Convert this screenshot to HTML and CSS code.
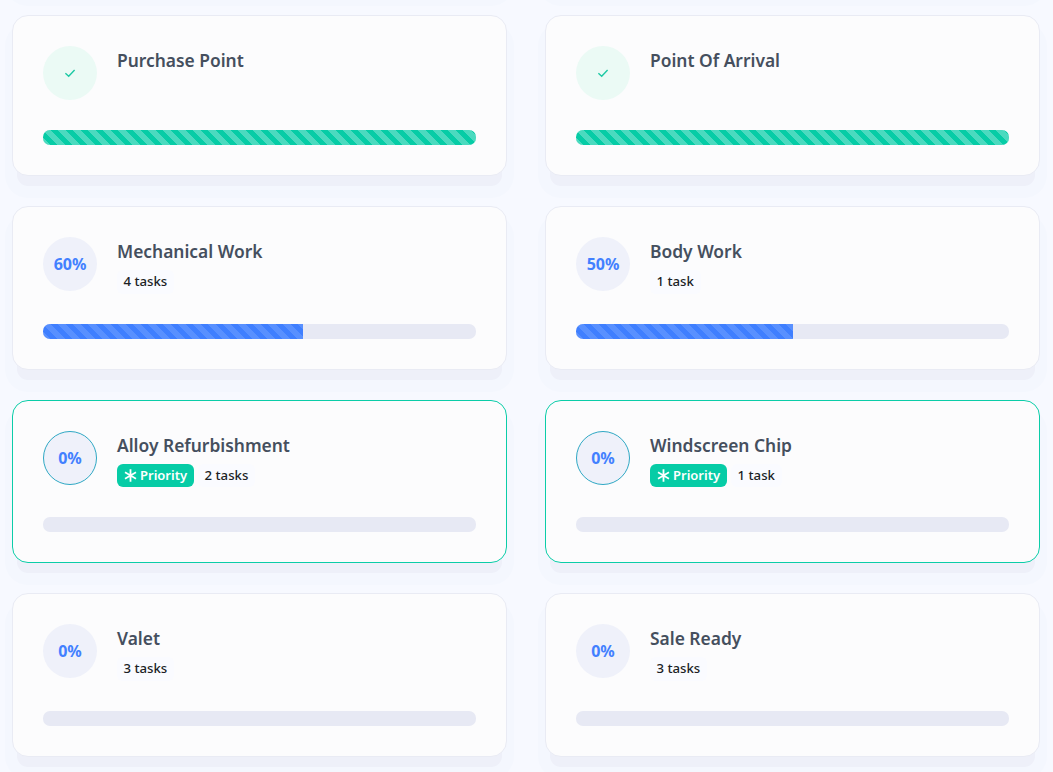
FILE: index.html
```html
<!DOCTYPE html>
<html lang="en">
<head>
  <meta charset="UTF-8" />
  <title>Vehicle Stages</title>
  <link rel="stylesheet" href="styles.css">
</head>
<body>
  <div class="stubs">
    <div class="stub"></div>
    <div class="stub"></div>
  </div>

  <div class="stages">
    <div class="card">
      <div class="card-head">
        <div class="circle done">
          <svg width="14" height="14" viewBox="0 0 14 14" aria-hidden="true"><path d="M2.4 7.2 5.7 10.2 11.6 3.9" fill="none" stroke="#1cc9a4" stroke-width="1.4"/></svg>
        </div>
        <div class="info">
          <h3>Purchase Point</h3>
        </div>
      </div>
      <div class="bar"><div class="fill green full"></div></div>
    </div>

    <div class="card">
      <div class="card-head">
        <div class="circle done">
          <svg width="14" height="14" viewBox="0 0 14 14" aria-hidden="true"><path d="M2.4 7.2 5.7 10.2 11.6 3.9" fill="none" stroke="#1cc9a4" stroke-width="1.4"/></svg>
        </div>
        <div class="info">
          <h3>Point Of Arrival</h3>
        </div>
      </div>
      <div class="bar"><div class="fill green full"></div></div>
    </div>

    <div class="card">
      <div class="card-head">
        <div class="circle">60%</div>
        <div class="info">
          <h3>Mechanical Work</h3>
          <div class="tags"><span class="tasks">4 tasks</span></div>
        </div>
      </div>
      <div class="bar"><div class="fill blue" style="width: 60%"></div></div>
    </div>

    <div class="card">
      <div class="card-head">
        <div class="circle">50%</div>
        <div class="info">
          <h3>Body Work</h3>
          <div class="tags"><span class="tasks">1 task</span></div>
        </div>
      </div>
      <div class="bar"><div class="fill blue" style="width: 50%"></div></div>
    </div>

    <div class="card priority">
      <div class="card-head">
        <div class="circle">0%</div>
        <div class="info">
          <h3>Alloy Refurbishment</h3>
          <div class="tags">
            <span class="flag">
              <svg width="13" height="13" viewBox="0 0 13 13" aria-hidden="true"><path d="M6.5 .2V12.8M1 3.3 12 9.7M12 3.3 1 9.7" stroke="#fff" stroke-width="1.8" fill="none"/></svg>
              Priority
            </span>
            <span class="tasks">2 tasks</span>
          </div>
        </div>
      </div>
      <div class="bar"></div>
    </div>

    <div class="card priority">
      <div class="card-head">
        <div class="circle">0%</div>
        <div class="info">
          <h3>Windscreen Chip</h3>
          <div class="tags">
            <span class="flag">
              <svg width="13" height="13" viewBox="0 0 13 13" aria-hidden="true"><path d="M6.5 .2V12.8M1 3.3 12 9.7M12 3.3 1 9.7" stroke="#fff" stroke-width="1.8" fill="none"/></svg>
              Priority
            </span>
            <span class="tasks">1 task</span>
          </div>
        </div>
      </div>
      <div class="bar"></div>
    </div>

    <div class="card">
      <div class="card-head">
        <div class="circle">0%</div>
        <div class="info">
          <h3>Valet</h3>
          <div class="tags"><span class="tasks">3 tasks</span></div>
        </div>
      </div>
      <div class="bar"></div>
    </div>

    <div class="card">
      <div class="card-head">
        <div class="circle">0%</div>
        <div class="info">
          <h3>Sale Ready</h3>
          <div class="tags"><span class="tasks">3 tasks</span></div>
        </div>
      </div>
      <div class="bar"></div>
    </div>
  </div>
</body>
</html>
```

FILE: styles.css
```css
html, body {
  height: 100%;
}
body {
  margin: 0;
  background: #f7f9ff;
  color: #454f5e;
  font-family: "Noto Sans", "Open Sans", sans-serif;
  overflow: hidden;
}
/* bottom of the row scrolled out above the top edge */
.stubs, .stages {
  display: grid;
  grid-template-columns: 495px 495px;
  column-gap: 38px;
  padding: 0 13px 0 12px;
}
.stubs {
  margin-bottom: 9px;
}
.stages {
  row-gap: 30px;
}
.stub {
  height: 26px;
  margin: -20px -7px 0;
  background: #f4f7fe;
  border-radius: 0 0 23px 23px;
}
.card {
  box-sizing: border-box;
  padding: 30px;
  background: #fcfcfd;
  border: 1px solid #e9ebf4;
  border-radius: 16px;
  box-shadow: 0 15px 0 -5px #eef0f9, 0 15px 0 7px #f4f7fe;
}
.card.priority {
  border-color: #0bcda8;
}
.card-head {
  display: flex;
  align-items: flex-start;
  gap: 20px;
}
.circle {
  box-sizing: border-box;
  width: 54px;
  height: 54px;
  flex: none;
  display: flex;
  align-items: center;
  justify-content: center;
  border-radius: 50%;
  background: #eff1fa;
  color: #4280ff;
  font-size: 16px;
  font-weight: 700;
}
.circle.done {
  background: #ebfaf5;
}
.priority .circle {
  border: 1px solid #2fa8c4;
}
.info h3 {
  margin: 0;
  font-size: 17.4px;
  line-height: 28px;
  font-weight: 600;
}
.tags {
  display: flex;
  gap: 4.5px;
  margin-top: 5px;
}
.tasks, .flag {
  box-sizing: border-box;
  display: inline-flex;
  align-items: center;
  height: 23.5px;
  padding-bottom: 1px;
  border-radius: 6px;
  font-size: 13.2px;
  font-weight: 500;
}
.tasks {
  padding-left: 6.5px;
  padding-right: 7px;
  background: #fafbff;
  color: #1c1f26;
}
.flag {
  gap: 3px;
  padding-left: 7px;
  padding-right: 6.5px;
  background: #06cca6;
  color: #fff;
  font-size: 13px;
  font-weight: 600;
}
.flag svg {
  margin-top: 1px;
}
.bar {
  height: 15px;
  margin-top: 30px;
  background: #e7e9f4;
  border-radius: 7px;
  overflow: hidden;
}
.fill {
  height: 100%;
  background-size: 15px 15px;
}
.fill.full {
  width: 100%;
}
.fill.green {
  background-color: #06cca6;
  background-image: linear-gradient(45deg, rgba(255,255,255,.28) 25%, transparent 25%, transparent 50%, rgba(255,255,255,.28) 50%, rgba(255,255,255,.28) 75%, transparent 75%, transparent);
}
.fill.blue {
  background-color: #3f7fff;
  background-image: linear-gradient(45deg, rgba(255,255,255,.13) 25%, transparent 25%, transparent 50%, rgba(255,255,255,.13) 50%, rgba(255,255,255,.13) 75%, transparent 75%, transparent);
}
```
